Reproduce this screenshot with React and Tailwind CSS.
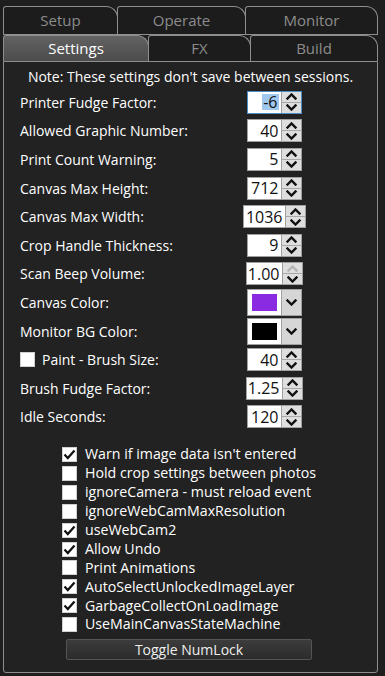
// Settings panel -- tabbed kiosk config
import React from "react";

const font = { fontFamily: '"Open Sans", "Noto Sans", "Liberation Sans", sans-serif' };

const Chevron = ({ up = true, faded = false }) => (
  <svg width="11" height="7" viewBox="0 0 11 7">
    <polyline points={up ? "1.5,5.5 5.5,1.5 9.5,5.5" : "1.5,1.5 5.5,5.5 9.5,1.5"}
      fill="none" stroke={faded ? "#b4b4b4" : "#111"} strokeWidth="2.4" strokeLinecap="square" />
  </svg>
);

const Spin = ({ value, w, focused, upFaded }) => (
  <div className={`flex h-[23px] ${w} border ${focused ? "border-[#4d8cc8]" : "border-[#a0a0a0]"} bg-white`}>
    <div className="flex-1 flex items-center justify-end pr-[2px] text-[16px] leading-none text-[#111]">
      <span className={focused ? "bg-[#9fc8ee] px-px" : ""}>{value}</span>
    </div>
    <div className="w-[20px] flex flex-col border-l border-[#a0a0a0] bg-[#dedede]">
      <div className="flex-1 flex items-center justify-center"><Chevron up faded={upFaded} /></div>
      <div className="flex-1 flex items-center justify-center border-t border-[#a8a8a8]"><Chevron up={false} /></div>
    </div>
  </div>
);

const ColorPick = ({ color }) => (
  <div className="flex h-[27px] w-[55px] border border-[#a0a0a0]">
    <div className="w-[33px] bg-white p-[4px]">
      <div className={`h-full ${color}`} />
    </div>
    <div className="flex-1 flex items-center justify-center border-l border-[#a0a0a0] bg-[#d6d6d6]">
      <Chevron up={false} />
    </div>
  </div>
);

const Box = ({ checked }) => (
  <div className="w-[15px] h-[15px] bg-white border border-[#d0d0d0] flex items-center justify-center shrink-0">
    {checked && (
      <svg width="13" height="11" viewBox="0 0 13 11">
        <polyline points="1.5,5.5 4.8,9 11.5,1.5" fill="none" stroke="#111" strokeWidth="2.2" />
      </svg>
    )}
  </div>
);

const rows = [
  { label: "Printer Fudge Factor:", ctl: <Spin value="-6" w="w-[55px]" focused /> },
  { label: "Allowed Graphic Number:", ctl: <Spin value="40" w="w-[55px]" /> },
  { label: "Print Count Warning:", ctl: <Spin value="5" w="w-[55px]" /> },
  { label: "Canvas Max Height:", ctl: <Spin value="712" w="w-[55px]" /> },
  { label: "Canvas Max Width:", ctl: <Spin value="1036" w="w-[63px]" /> },
  { label: "Crop Handle Thickness:", ctl: <Spin value="9" w="w-[55px]" /> },
  { label: "Scan Beep Volume:", ctl: <Spin value="1.00" w="w-[57px]" upFaded /> },
  { label: "Canvas Color:", ctl: <ColorPick color="bg-[#8a2be2]" /> },
  { label: "Monitor BG Color:", ctl: <ColorPick color="bg-black" /> },
  { label: "Paint - Brush Size:", box: true, ctl: <Spin value="40" w="w-[55px]" /> },
  { label: "Brush Fudge Factor:", ctl: <Spin value="1.25" w="w-[57px]" /> },
  { label: "Idle Seconds:", ctl: <Spin value="120" w="w-[55px]" /> },
];

const checks = [
  ["Warn if image data isn't entered", true],
  ["Hold crop settings between photos", false],
  ["ignoreCamera - must reload event", false],
  ["ignoreWebCamMaxResolution", false],
  ["useWebCam2", true],
  ["Allow Undo", true],
  ["Print Animations", false],
  ["AutoSelectUnlockedImageLayer", true],
  ["GarbageCollectOnLoadImage", true],
  ["UseMainCanvasStateMachine", false],
];

const Tab = ({ label, w, active, last }) => (
  <div className={`${w} h-full -ml-px first:ml-0 flex items-center justify-center border border-b-0 border-[#8e8e8e] rounded-tl-[3px] rounded-tr-[12px] text-[15px] ${
    active ? "bg-gradient-to-b from-[#626262] to-[#4c4c4c] text-white" : "bg-[#1c1c1c] text-[#8c8c8c]"
  } ${last ? "flex-1" : ""}`}>
    {label}
  </div>
);

export default function App() {
  return (
    <div className="w-[385px] h-[676px] bg-[#1e1e1e] pt-[6px] pl-[3px] pr-[7px] overflow-hidden" style={font}>
      <div className="flex h-[28px]">
        <Tab label="Setup" w="w-[115px]" />
        <Tab label="Operate" w="w-[129px]" />
        <Tab label="Monitor" w="" last />
      </div>
      <div className="flex h-[27px] border-t border-[#8e8e8e]">
        <Tab label="Settings" w="w-[146px]" active />
        <Tab label="FX" w="w-[103px]" />
        <Tab label="Build" w="" last />
      </div>
      <div className="h-[612px] bg-[#222] border border-[#8e8e8e] rounded-b-[3px] text-white text-[14px] flex flex-col">
        <div className="text-center pt-[5px] h-[26px] leading-[20px]">Note: These settings don't save between sessions.</div>
        <div className="flex flex-col">
          {rows.map((r) => (
            <div key={r.label} className="h-[28.6px] flex items-center">
              <div className="w-[215px] pl-[16px] flex items-center gap-[7px]">
                {r.box && <Box />}
                <span>{r.label}</span>
              </div>
              <div className="w-[110px] flex justify-center">{r.ctl}</div>
            </div>
          ))}
        </div>
        <div className="flex flex-col pl-[58px] mt-[14px] text-[14.2px]">
          {checks.map(([label, on]) => (
            <div key={label} className="h-[18.9px] flex items-center gap-[8px]">
              <Box checked={on} />
              <span className="leading-none">{label}</span>
            </div>
          ))}
        </div>
        <button className="mt-[5px] ml-[62px] w-[246px] h-[21px] rounded-[2px] border border-[#555] bg-gradient-to-b from-[#3c3c3c] to-[#2b2b2b] text-[14px] text-[#eee] leading-none">
          Toggle NumLock
        </button>
      </div>
    </div>
  );
}
